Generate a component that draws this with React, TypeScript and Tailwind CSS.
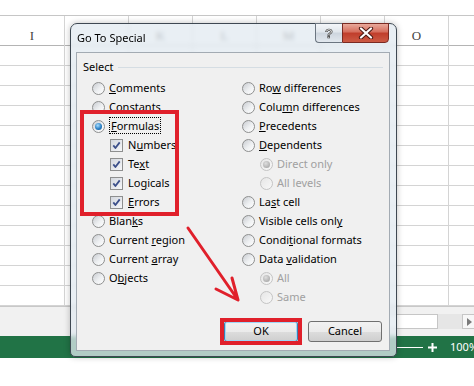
import React from "react";

const LETTERS = ["I", "", "K", "L", "M", "N", "O", ""];

function Radio({ checked = false, disabled = false }: { checked?: boolean; disabled?: boolean }) {
  return (
    <span
      className={
        disabled
          ? "flex h-[13px] w-[13px] shrink-0 items-center justify-center rounded-full border border-[#c4c4c4] bg-[linear-gradient(135deg,#e6e6e6,#f8f8f8)]"
          : "flex h-[13px] w-[13px] shrink-0 items-center justify-center rounded-full border border-[#8e8f8f] bg-[linear-gradient(135deg,#c9ccd1,#eef0f2_55%,#ffffff)]"
      }
    >
      {checked && (
        <span
          className={
            disabled
              ? "h-[7px] w-[7px] rounded-full bg-[radial-gradient(circle_at_40%_35%,#dedede,#9c9c9c)]"
              : "h-[7px] w-[7px] rounded-full bg-[radial-gradient(circle_at_40%_35%,#a8deff,#2b80c5_55%,#0e4f8a)]"
          }
        />
      )}
    </span>
  );
}

function Check() {
  return (
    <span className="flex h-[13px] w-[13px] shrink-0 items-center justify-center border border-[#8e8f8f] bg-[linear-gradient(135deg,#d3d7de,#f6f7f9)]">
      <svg width="11" height="11" viewBox="0 0 11 11">
        <path d="M2.3 5.4 L4.4 8 L8.7 2.4" fill="none" stroke="#3b4f8a" strokeWidth="1.8" strokeLinejoin="round" />
      </svg>
    </span>
  );
}

function Row({
  children,
  control,
  indent = false,
  disabled = false,
  check = false,
}: {
  children: React.ReactNode;
  control: React.ReactNode;
  indent?: boolean;
  disabled?: boolean;
  check?: boolean;
}) {
  return (
    <div
      className={
        (indent ? "pl-[18px] " : "") +
        (check ? "gap-[5px] " : "gap-[4px] ") +
        (disabled ? "text-[#a0a0a0] " : "text-black ") +
        "flex h-[19px] items-center whitespace-nowrap"
      }
    >
      {control}
      <span>{children}</span>
    </div>
  );
}

export default function App() {
  return (
    <div className="relative h-[386px] w-[474px] overflow-hidden bg-white font-['Noto_Sans',sans-serif]">
      {/* spreadsheet */}
      <div className="mt-[15px] border-t border-[#c6c6c6]">
        <div className="grid h-[30px] grid-cols-[65px_repeat(6,64px)_1fr] border-b border-[#b4b4b4]">
          {LETTERS.map((l, i) => (
            <div
              key={i}
              className={
                (i === 7 ? "" : "border-r border-[#d4d4d4] ") +
                "flex items-center justify-center pt-[10px] font-['Liberation_Serif',serif] text-[13px] text-[#444444]"
              }
            >
              {l}
            </div>
          ))}
        </div>
        {Array.from({ length: 13 }).map((_, r) => (
          <div key={r} className="grid h-[20px] grid-cols-[65px_repeat(6,64px)_1fr] border-b border-[#d4d4d4]">
            {Array.from({ length: 8 }).map((__, c) => (
              <div key={c} className={c === 7 ? "" : "border-r border-[#d4d4d4]"} />
            ))}
          </div>
        ))}
        <div className="flex h-[30px] items-center border-t border-[#c8c8c8] bg-[#f1f1f1] pl-[300px]">
          <div className="h-[15px] w-[138px] shrink-0 border border-[#c6c6c6] bg-white" />
          <div className="h-[15px] w-[24px] shrink-0 bg-[#e6e6e6]" />
          <div className="flex h-[15px] w-[14px] shrink-0 items-center justify-center border border-[#c6c6c6] bg-[#f7f7f7]">
            <svg width="5" height="8" viewBox="0 0 5 8">
              <path d="M0 0 L5 4 L0 8 Z" fill="#7a7a7a" />
            </svg>
          </div>
        </div>
        <div className="flex h-[22px] items-center bg-[#217346] pl-[396px] text-white">
          <div className="h-px w-[27px] shrink-0 bg-white" />
          <svg width="9" height="9" viewBox="0 0 9 9" className="ml-[5px] shrink-0">
            <path d="M4.5 0V9M0 4.5H9" stroke="white" strokeWidth="2" />
          </svg>
          <span className="ml-[13px] shrink-0 whitespace-nowrap text-[11px]">100%</span>
        </div>
      </div>

      {/* dialog */}
      <div className="absolute left-[70px] top-[23px] flex h-[334px] w-[327px] flex-col rounded-t-[7px] rounded-b-[5px] border border-[#3e4852] bg-[#e2e9f0]/75 shadow-[0_0_6px_rgba(0,0,0,0.25)] backdrop-blur-[2px]">
        <div className="flex h-[28px] shrink-0">
          <div className="pl-[6px] pt-[6px] text-[11px] leading-[15px] text-black">Go To Special</div>
          <div className="-mt-px ml-auto mr-[7px] flex h-[20px]">
            <div className="flex w-[27px] items-center justify-center rounded-bl-[4px] border border-r-0 border-[#6b7580] bg-[linear-gradient(#f4f6f9,#e0e6ec_45%,#cdd5de_50%,#e2e8ee)] font-['Liberation_Sans',sans-serif] text-[13px] font-bold leading-none text-[#f2f2f2] [-webkit-text-stroke:0.7px_#404040]">
              ?
            </div>
            <div className="flex w-[47px] items-center justify-center rounded-br-[4px] border border-[#7a2a22] bg-[linear-gradient(#e9a99b,#d56c5b_45%,#c03d2b_50%,#cc5a44)]">
              <svg width="16" height="12" viewBox="0 0 16 12">
                <path d="M3 1.5 L13 10.5 M13 1.5 L3 10.5" stroke="#4a1a14" strokeWidth="4.2" strokeLinecap="round" />
                <path d="M3 1.5 L13 10.5 M13 1.5 L3 10.5" stroke="#ffffff" strokeWidth="2.2" strokeLinecap="round" />
              </svg>
            </div>
          </div>
        </div>

        <div className="mb-[5px] ml-[5px] mr-[6px] flex flex-1 flex-col border border-[#a3abb3] bg-[#f0f0f0] text-[11px] text-black">
          <div className="mt-[5px] flex h-[18px] items-center pl-[6px] pr-[6px]">
            <span>Select</span>
            <div className="ml-[4px] h-px flex-1 bg-[#d5dde3]" />
          </div>
          <div className="mt-[3px] grid grid-cols-[150px_1fr] pl-[15px]">
            <div className="flex flex-col">
              <Row control={<Radio />}><u>C</u>omments</Row>
              <Row control={<Radio />}>Co<u>n</u>stants</Row>
              <Row control={<Radio checked />}>
                <span className="border border-dotted border-black px-px leading-[11px]">
                  <u>F</u>ormulas
                </span>
              </Row>
              <Row indent check control={<Check />}>N<u>u</u>mbers</Row>
              <Row indent check control={<Check />}>Te<u>x</u>t</Row>
              <Row indent check control={<Check />}>Lo<u>g</u>icals</Row>
              <Row indent check control={<Check />}><u>E</u>rrors</Row>
              <Row control={<Radio />}>Blan<u>k</u>s</Row>
              <Row control={<Radio />}>Current <u>r</u>egion</Row>
              <Row control={<Radio />}>Current <u>a</u>rray</Row>
              <Row control={<Radio />}>O<u>b</u>jects</Row>
            </div>
            <div className="flex flex-col">
              <Row control={<Radio />}>Ro<u>w</u> differences</Row>
              <Row control={<Radio />}>Colu<u>m</u>n differences</Row>
              <Row control={<Radio />}><u>P</u>recedents</Row>
              <Row control={<Radio />}><u>D</u>ependents</Row>
              <Row indent disabled control={<Radio checked disabled />}>Direct only</Row>
              <Row indent disabled control={<Radio disabled />}>All levels</Row>
              <Row control={<Radio />}>La<u>s</u>t cell</Row>
              <Row control={<Radio />}>Visible cells onl<u>y</u></Row>
              <Row control={<Radio />}>Condi<u>t</u>ional formats</Row>
              <Row control={<Radio />}>Data <u>v</u>alidation</Row>
              <Row indent disabled control={<Radio checked disabled />}>All</Row>
              <Row indent disabled control={<Radio disabled />}>Same</Row>
            </div>
          </div>
          <div className="mt-[14px] flex justify-end gap-[10px] pr-[7px]">
            <button className="flex h-[21px] w-[74px] items-center justify-center rounded-[3px] border border-[#3c7fb1] bg-[linear-gradient(#f2f2f2,#ebebeb_50%,#dddddd_50%,#cfcfcf)] text-[11px] text-black shadow-[inset_0_0_0_1px_#9fd6f6]">
              OK
            </button>
            <button className="flex h-[21px] w-[74px] items-center justify-center rounded-[3px] border border-[#707070] bg-[linear-gradient(#f2f2f2,#ebebeb_50%,#dddddd_50%,#cfcfcf)] text-[11px] text-black">
              Cancel
            </button>
          </div>
        </div>
      </div>

      {/* annotations */}
      <div className="absolute left-[80px] top-[110px] h-[106px] w-[99px] border-[4px] border-[#e0202b]" />
      <div className="absolute left-[220px] top-[318px] h-[27px] w-[82px] border-[4px] border-[#e0202b]" />
      <svg className="absolute left-0 top-0" width="474" height="386" viewBox="0 0 474 386">
        <path
          d="M188 228 L238 300 M216 289 L238 300 L232 278"
          stroke="#e0202b"
          strokeWidth="3"
          fill="none"
          strokeLinecap="round"
          strokeLinejoin="round"
        />
      </svg>
    </div>
  );
}
